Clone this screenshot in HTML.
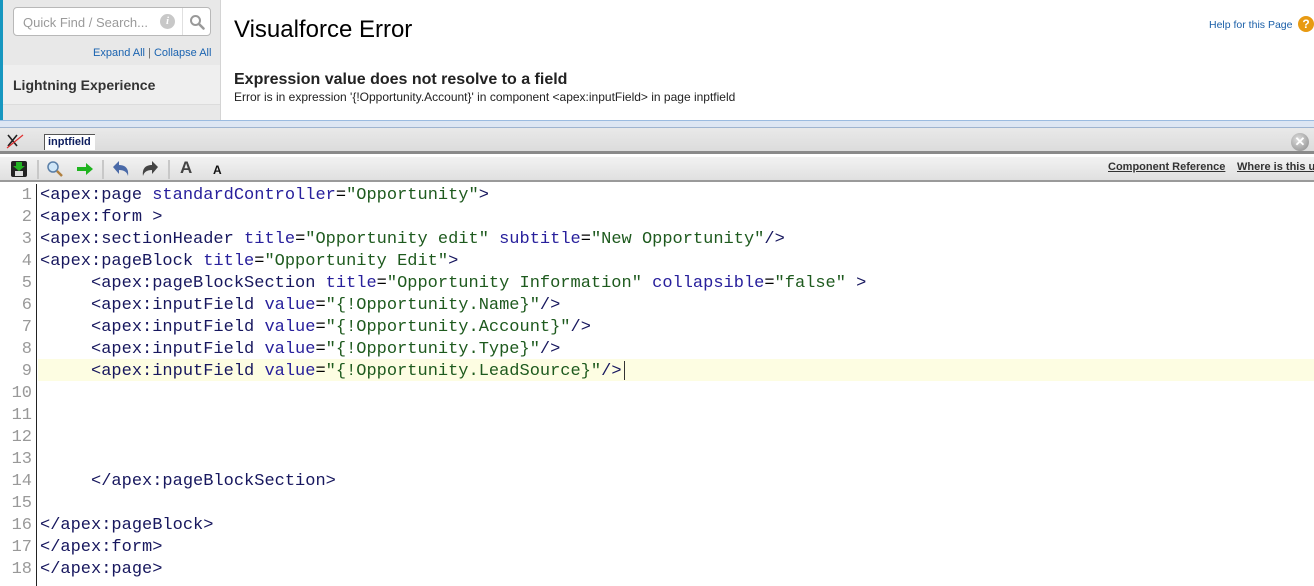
<!DOCTYPE html>
<html><head><meta charset="utf-8"><style>
*{margin:0;padding:0;box-sizing:border-box}
body{width:1314px;height:586px;overflow:hidden;background:#fff;font-family:"Liberation Sans",Arial,sans-serif;position:relative}
.abs{position:absolute}
#side{left:0;top:0;width:221px;height:120px;background:#e8e8e8;border-right:1px solid #d4d4d4}
#stripe{left:0;top:0;width:3px;height:120px;background:#1797c0}
#search{left:13px;top:7px;width:198px;height:29px;border:1px solid #b8b8b8;border-radius:4px;background:#fff}
#search span{position:absolute;left:9px;top:7px;font-size:13px;color:#9a9a9a}
#info{left:160px;top:14px;width:15px;height:15px;border-radius:50%;background:#c8c8c8;color:#fff;font-size:11px;font-weight:bold;font-style:italic;text-align:center;line-height:15px;font-family:"Liberation Serif",serif}
#sep{left:182px;top:8px;width:1px;height:27px;background:#e0e0e0}
#links{left:93px;top:47px;font-size:11px;color:#1a63b0}
#le{left:3px;top:65px;width:217px;height:40px;background:#efefef;border-bottom:1px solid #dcdcdc}
#le span{position:absolute;left:10px;top:12px;font-size:14px;font-weight:bold;color:#333}
h1{position:absolute;left:234px;top:16px;font-size:24px;font-weight:normal;color:#000}
#help{left:1209px;top:19px;font-size:10.5px;color:#1a5fa8}
#q{left:1298px;top:16px;width:16px;height:16px;border-radius:50%;background:#e89a12;color:#fff;font-size:12px;font-weight:bold;text-align:center;line-height:16px}
#e1{left:234px;top:71px;font-size:16px;font-weight:bold;color:#222}
#e2{left:234px;top:90px;font-size:12px;color:#222}
#bl{left:0;top:120px;width:1314px;height:8px;background:#dde6f3;border-top:1px solid #9bbbe0;border-bottom:1px solid #9fb4d0}
#bar1{left:0;top:128px;width:1314px;height:26px;background:linear-gradient(#e9e9e9,#dcdcdc);border-bottom:3px solid #8a8a8a}
#tab{left:44px;top:134px;width:51px;height:16px;background:#fff;border:1px solid #555;border-right:none;border-bottom:none;font-size:11px;font-weight:bold;color:#102060;padding-left:3px;line-height:15px}
#closeb{left:1291px;top:133px;width:18px;height:18px;border-radius:50%;background:radial-gradient(circle at 40% 35%,#ddd,#888);color:#fff;font-size:13px;text-align:center;line-height:18px;font-weight:bold}
#bar2{left:0;top:157px;width:1314px;height:25px;background:linear-gradient(#f2f2f2,#e0e0e0);border-bottom:2px solid #9a9a9a}
.vs{position:absolute;top:3px;width:2px;height:19px;background:#c8c8c8}
#cr{left:1108px;top:161px;font-size:11px;font-weight:bold;color:#333;text-decoration:underline}
#wr{left:1237px;top:161px;font-size:11px;font-weight:bold;color:#333;text-decoration:underline;white-space:nowrap}
#gut{left:0;top:184px;width:37px;height:402px;border-right:1px solid #222}
#hl{left:38px;top:359px;width:1276px;height:22px;background:#fdfde2}
#code{left:0;top:185px;font-family:"Liberation Mono",monospace;font-size:17px;line-height:22px;white-space:pre}
.ln{display:inline-block;width:32px;text-align:right;color:#999;margin-right:8px}
.t{color:#17175e}.a{color:#28209c}.v{color:#1e5a1e}
#caret{left:624px;top:361px;width:1px;height:19px;background:#333}
</style></head><body>
<div class="abs" id="side"></div><div class="abs" id="stripe"></div>
<div class="abs" id="search"><span>Quick Find / Search...</span></div>
<div class="abs" id="info">i</div><div class="abs" id="sep"></div>
<svg class="abs" style="left:189px;top:14px" width="16" height="16" viewBox="0 0 16 16"><circle cx="6.5" cy="6.5" r="4.5" fill="none" stroke="#999" stroke-width="2"/><path d="M10 10l4.5 4.5" stroke="#999" stroke-width="2.5" stroke-linecap="round"/></svg>
<div class="abs" id="links">Expand All <span style="color:#666">|</span> Collapse All</div>
<div class="abs" id="le"><span>Lightning Experience</span></div>
<h1>Visualforce Error</h1>
<div class="abs" id="help">Help for this Page</div><div class="abs" id="q">?</div>
<div class="abs" id="e1">Expression value does not resolve to a field</div>
<div class="abs" id="e2">Error is in expression '{!Opportunity.Account}' in component &lt;apex:inputField&gt; in page inptfield</div>
<div class="abs" id="bl"></div>
<div class="abs" id="bar1"></div>
<svg class="abs" style="left:5px;top:132px" width="20" height="18" viewBox="0 0 20 18"><path d="M3 3l9 11M12 3L3 14" stroke="#222" stroke-width="1.6"/><path d="M2 16L18 3" stroke="#e03030" stroke-width="1.2"/></svg>
<div class="abs" id="tab">inptfield</div>
<div class="abs" id="closeb">✕</div>
<div class="abs" id="bar2">
<div class="vs" style="left:37px"></div><div class="vs" style="left:102px"></div><div class="vs" style="left:168px"></div>
</div>
<svg class="abs" style="left:10px;top:160px" width="18" height="18" viewBox="0 0 18 18"><rect x="1" y="1" width="16" height="16" rx="2" fill="#222"/><rect x="5" y="11" width="8" height="5" fill="#ddd"/><path d="M6 2h6v4h3l-6 5-6-5h3z" fill="#22b022"/></svg>
<svg class="abs" style="left:46px;top:160px" width="18" height="18" viewBox="0 0 18 18"><circle cx="7" cy="7" r="5" fill="#cfe6f8" stroke="#5a7fa8" stroke-width="1.5"/><path d="M11 11l5 5" stroke="#b08040" stroke-width="2.5"/></svg>
<svg class="abs" style="left:76px;top:162px" width="18" height="14" viewBox="0 0 18 14"><path d="M1 5h9V1l7 6-7 6V9H1z" fill="#1fb41f"/></svg>
<svg class="abs" style="left:112px;top:160px" width="18" height="18" viewBox="0 0 18 18"><path d="M1 7l6-6v4c6 0 10 3 9 11-1-4-4-6-9-6v4z" fill="#4a6aa8"/></svg>
<svg class="abs" style="left:141px;top:160px" width="18" height="18" viewBox="0 0 18 18"><path d="M17 7l-6-6v4C5 5 1 8 2 16c1-4 4-6 9-6v4z" fill="#444"/></svg>
<div class="abs" style="left:180px;top:158px;font-size:17px;font-weight:bold;color:#444">A</div>
<div class="abs" style="left:213px;top:163px;font-size:12px;font-weight:bold;color:#111">A</div>
<div class="abs" id="cr">Component Reference</div>
<div class="abs" id="wr">Where is this used?</div>
<div class="abs" id="hl"></div>
<div class="abs" id="gut"></div>
<div class="abs" id="code"><span class="ln">1</span><span class="t">&lt;apex:page</span> <span class="a">standardController</span>=<span class="v">"Opportunity"</span><span class="t">&gt;</span>
<span class="ln">2</span><span class="t">&lt;apex:form &gt;</span>
<span class="ln">3</span><span class="t">&lt;apex:sectionHeader</span> <span class="a">title</span>=<span class="v">"Opportunity edit"</span> <span class="a">subtitle</span>=<span class="v">"New Opportunity"</span><span class="t">/&gt;</span>
<span class="ln">4</span><span class="t">&lt;apex:pageBlock</span> <span class="a">title</span>=<span class="v">"Opportunity Edit"</span><span class="t">&gt;</span>
<span class="ln">5</span>     <span class="t">&lt;apex:pageBlockSection</span> <span class="a">title</span>=<span class="v">"Opportunity Information"</span> <span class="a">collapsible</span>=<span class="v">"false"</span> <span class="t">&gt;</span>
<span class="ln">6</span>     <span class="t">&lt;apex:inputField</span> <span class="a">value</span>=<span class="v">"{!Opportunity.Name}"</span><span class="t">/&gt;</span>
<span class="ln">7</span>     <span class="t">&lt;apex:inputField</span> <span class="a">value</span>=<span class="v">"{!Opportunity.Account}"</span><span class="t">/&gt;</span>
<span class="ln">8</span>     <span class="t">&lt;apex:inputField</span> <span class="a">value</span>=<span class="v">"{!Opportunity.Type}"</span><span class="t">/&gt;</span>
<span class="ln">9</span>     <span class="t">&lt;apex:inputField</span> <span class="a">value</span>=<span class="v">"{!Opportunity.LeadSource}"</span><span class="t">/&gt;</span>
<span class="ln">10</span>
<span class="ln">11</span>
<span class="ln">12</span>
<span class="ln">13</span>
<span class="ln">14</span>     <span class="t">&lt;/apex:pageBlockSection&gt;</span>
<span class="ln">15</span>
<span class="ln">16</span><span class="t">&lt;/apex:pageBlock&gt;</span>
<span class="ln">17</span><span class="t">&lt;/apex:form&gt;</span>
<span class="ln">18</span><span class="t">&lt;/apex:page&gt;</span></div>
<div class="abs" id="caret"></div>
</body></html>
